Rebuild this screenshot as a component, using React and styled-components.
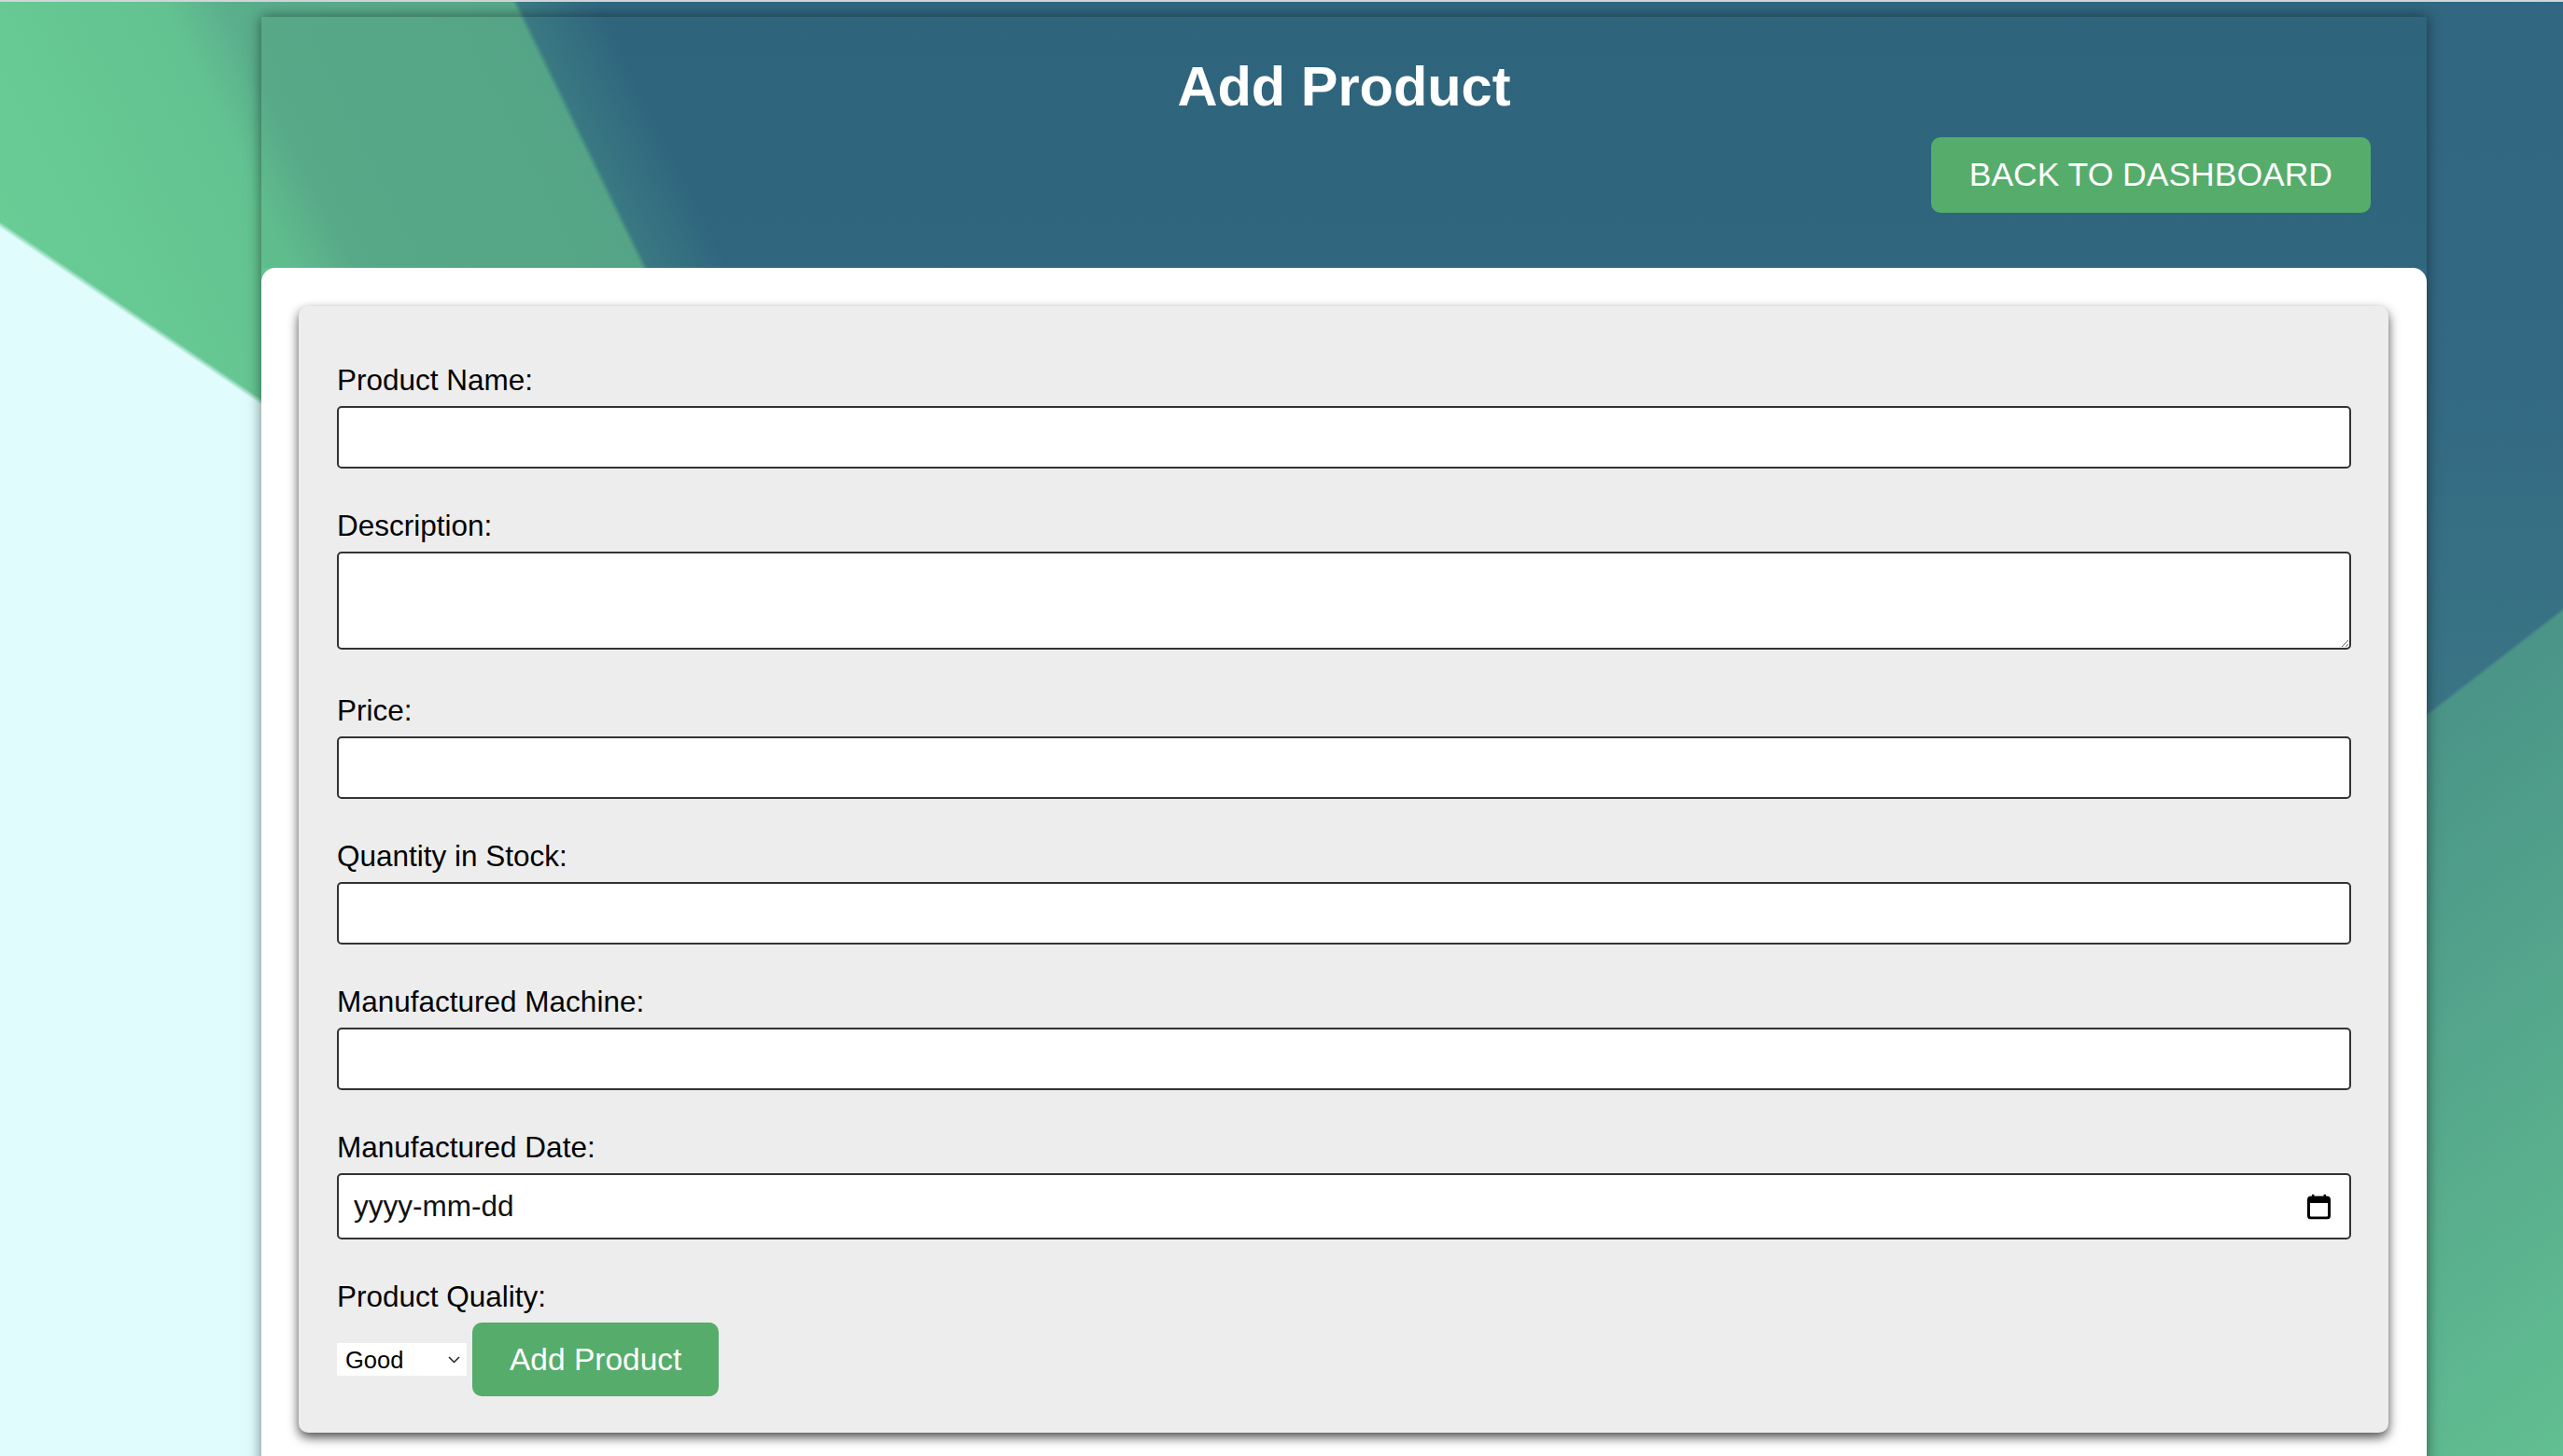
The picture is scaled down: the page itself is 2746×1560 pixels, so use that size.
import React from "react";
import styled, {createGlobalStyle} from "styled-components";

const GlobalStyle = createGlobalStyle`
  html, body {
    margin: 0;
    padding: 0;
    overflow: hidden;
  }
  body {
    font-family: "Liberation Sans", Arial, Helvetica, sans-serif;
  }
  * {
    box-sizing: border-box;
  }
`;

// wallpaper: flat polygons done with hard gradient stops
const Page = styled.div`
  height: 100vh;
  overflow: hidden;
  padding: 18px 146px 0 280px;
  background:
    linear-gradient(#d2d5d7, #d2d5d7) top left / 100% 2px no-repeat,
    linear-gradient(214.16deg, transparent 1738px, #e1fcfd 1744px),
    linear-gradient(142.3deg, transparent 2194px, #4a9488 2198px, #62bf91 100%),
    linear-gradient(64deg, #6acf96 520px, #63c291 840px, #5aae8c 900px, #58a98b 1176px, #3b7c86 1182px, transparent 1260px),
    linear-gradient(180deg, #316781 0, #336983 400px, #3a7585 780px);
`;

const Panel = styled.div`
  box-shadow: 0 0 14px rgba(0, 0, 0, 0.5);
`;

const Header = styled.header`
  display: flex;
  flex-direction: column;
  padding: 41px 60px 59px;
  background: rgba(10, 30, 40, 0.03);
`;

const Title = styled.h1`
  margin: 0;
  text-align: center;
  color: #fff;
  font-size: 59.5px;
  font-weight: 700;
  line-height: 1.15;
`;

const GreenButton = styled.button`
  height: ${p => p.$h}px;
  padding: 0 ${p => p.$px}px;
  border: 0;
  border-radius: 10px;
  background: #56ac6b;
  color: #fff;
  font-family: inherit;
  font-size: ${p => p.$fs}px;
  white-space: nowrap;
  cursor: pointer;
`;

const BackButton = styled(GreenButton)`
  align-self: flex-end;
  margin-top: 20px;
`;

const Card = styled.main`
  background: #fff;
  border-radius: 15px 15px 0 0;
  padding: 41px 41px 40px 40px;
`;

const FormBox = styled.form`
  background: #ededed;
  border-radius: 10px;
  padding: 61px 40px 39px 41px;
  box-shadow: 0 5px 12px rgba(0, 0, 0, 0.7);
`;

const Field = styled.div`
  display: flex;
  flex-direction: column;
  margin-bottom: 43px;
`;

const Label = styled.label`
  display: block;
  font-size: 31.5px;
  line-height: 36px;
  color: #000;
  margin-bottom: 10px;
`;

const TextInput = styled.input`
  display: block;
  width: 100%;
  height: ${p => p.$h || 67}px;
  border: 2px solid #333;
  border-radius: 5px;
  background: #fff;
  padding: 0 16px;
  font-family: inherit;
  font-size: 31.5px;
  color: #000;
  outline: none;

  &::placeholder {
    color: #111;
    opacity: 1;
  }
`;

const TextArea = styled.textarea`
  display: block;
  width: 100%;
  height: 105px;
  margin-bottom: 4px;
  border: 2px solid #333;
  border-radius: 5px;
  background: #fff;
  padding: 10px 16px;
  font-family: inherit;
  font-size: 31.5px;
  resize: vertical;
  outline: none;
`;

const DateWrap = styled.div`
  position: relative;
`;

const CalendarIcon = styled.svg`
  position: absolute;
  right: 22px;
  top: 50%;
  transform: translateY(-50%);
  pointer-events: none;
`;

const Actions = styled.div`
  display: flex;
  align-items: center;
  gap: 6px;
`;

const SelectWrap = styled.span`
  position: relative;
  display: inline-flex;
`;

const Select = styled.select`
  appearance: none;
  -webkit-appearance: none;
  width: 139px;
  height: 35px;
  border: 0;
  border-radius: 0;
  background: #fff;
  padding: 0 30px 0 9px;
  font-family: inherit;
  font-size: 25.5px;
  color: #000;
  outline: none;
`;

const Chevron = styled.svg`
  position: absolute;
  right: 7px;
  top: 50%;
  transform: translateY(-50%);
  pointer-events: none;
`;

const fields = [
    {id: "name", label: "Product Name:"},
    {id: "description", label: "Description:", area: true},
    {id: "price", label: "Price:"},
    {id: "quantity", label: "Quantity in Stock:"},
    {id: "machine", label: "Manufactured Machine:"},
];

export default function App() {
    return (
        <Page>
            <GlobalStyle/>
            <Panel>
                <Header>
                    <Title>Add Product</Title>
                    <BackButton type="button" $h={81} $px={41} $fs={35.5}>BACK TO DASHBOARD</BackButton>
                </Header>
                <Card>
                    <FormBox onSubmit={e => e.preventDefault()}>
                        {fields.map(f => (
                            <Field key={f.id}>
                                <Label htmlFor={f.id}>{f.label}</Label>
                                {f.area ? <TextArea id={f.id}/> : <TextInput id={f.id} type="text"/>}
                            </Field>
                        ))}
                        <Field>
                            <Label htmlFor="date">Manufactured Date:</Label>
                            <DateWrap>
                                <TextInput id="date" type="text" placeholder="yyyy-mm-dd" $h={71}/>
                                <CalendarIcon width="25" height="27" viewBox="0 0 25 27">
                                    <rect x="5" y="0" width="2.4" height="4" fill="#000"/>
                                    <rect x="17.6" y="0" width="2.4" height="4" fill="#000"/>
                                    <rect x="1.5" y="3.5" width="22" height="22" rx="2.5" fill="none" stroke="#000" strokeWidth="3"/>
                                    <rect x="1.5" y="3.5" width="22" height="6" fill="#000"/>
                                </CalendarIcon>
                            </DateWrap>
                        </Field>
                        <Label htmlFor="quality">Product Quality:</Label>
                        <Actions>
                            <SelectWrap>
                                <Select id="quality" defaultValue="Good">
                                    <option>Good</option>
                                    <option>Average</option>
                                    <option>Poor</option>
                                </Select>
                                <Chevron width="13" height="8" viewBox="0 0 13 8">
                                    <path d="M1 1 L6.5 6.5 L12 1" fill="none" stroke="#222" strokeWidth="1.5"/>
                                </Chevron>
                            </SelectWrap>
                            <GreenButton type="submit" $h={79} $px={40} $fs={33.5}>Add Product</GreenButton>
                        </Actions>
                    </FormBox>
                </Card>
            </Panel>
        </Page>
    );
}
